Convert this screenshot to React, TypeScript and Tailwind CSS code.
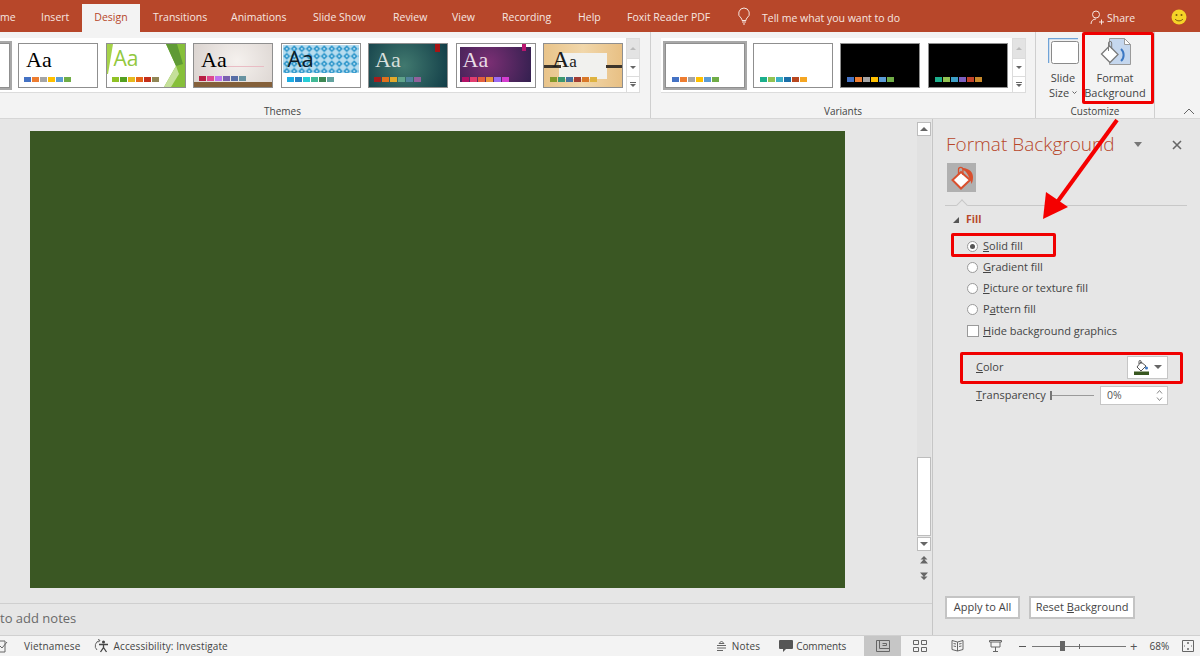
import type { ReactNode } from 'react';

const tabs = [
  { label: 'me', w: 'w-[41px]' },
  { label: 'Insert', w: 'w-[41px]' },
  { label: 'Design', w: 'w-[58px] text-center' },
  { label: 'Transitions', w: 'ml-[13px] w-[78px]' },
  { label: 'Animations', w: 'w-[82px]' },
  { label: 'Slide Show', w: 'w-[80px]' },
  { label: 'Review', w: 'w-[59px]' },
  { label: 'View', w: 'w-[50px]' },
  { label: 'Recording', w: 'w-[76px]' },
  { label: 'Help', w: 'w-[49px]' },
  { label: 'Foxit Reader PDF', w: 'w-[110px]' },
];

const palettes = {
  office: ['bg-[#4472c4]', 'bg-[#ed7d31]', 'bg-[#a5a5a5]', 'bg-[#ffc000]', 'bg-[#5b9bd5]', 'bg-[#70ad47]'],
  facet: ['bg-[#90c226]', 'bg-[#54a021]', 'bg-[#e6b91e]', 'bg-[#e76618]', 'bg-[#c42f1a]', 'bg-[#918655]'],
  wood: ['bg-[#b71e42]', 'bg-[#de478e]', 'bg-[#bc72f0]', 'bg-[#795faf]', 'bg-[#586ea6]', 'bg-[#6892a0]'],
  blue: ['bg-[#1cade4]', 'bg-[#2683c6]', 'bg-[#27ced7]', 'bg-[#42ba97]', 'bg-[#3e8853]', 'bg-[#62a39f]'],
  teal: ['bg-[#a51c1c]', 'bg-[#e0701c]', 'bg-[#e3a92a]', 'bg-[#5fa38a]', 'bg-[#4f829b]', 'bg-[#93609b]'],
  purple: ['bg-[#b31166]', 'bg-[#e33d6f]', 'bg-[#e45f3c]', 'bg-[#e9943a]', 'bg-[#9b6bf2]', 'bg-[#d53dd0]'],
  tan: ['bg-[#83992a]', 'bg-[#3c9770]', 'bg-[#44709d]', 'bg-[#a23c33]', 'bg-[#d97828]', 'bg-[#deb340]'],
  green2: ['bg-[#1caf8c]', 'bg-[#92c352]', 'bg-[#3cafc6]', 'bg-[#1b6fa8]', 'bg-[#b8471f]', 'bg-[#f5a623]'],
  green3: ['bg-[#1caf8c]', 'bg-[#92c352]', 'bg-[#3c9fc6]', 'bg-[#7d5fc0]', 'bg-[#c2432a]', 'bg-[#c98a2b]'],
};

function Swatches({ colors, className }: { colors: string[]; className: string }) {
  return (
    <div className={`absolute flex gap-px ${className}`}>
      {colors.map((c, i) => (
        <div key={i} className={`h-[5px] w-[7px] ${c}`} />
      ))}
    </div>
  );
}

function Aa({ className, children = 'Aa' }: { className: string; children?: ReactNode }) {
  return <span className={`absolute leading-none ${className}`}>{children}</span>;
}

function Thumb({ className = '', children }: { className?: string; children: ReactNode }) {
  return (
    <div className={`relative h-[45px] w-[80px] shrink-0 overflow-hidden border border-[#8f8f8f] ${className}`}>
      {children}
    </div>
  );
}

const serif = "font-['Liberation_Serif',serif]";

function ThemeGallery() {
  return (
    <div className="flex h-[55px] items-center gap-[7.5px] border-b border-[#dcdcdc] bg-white pl-[18px] pr-[3px]">
      <Thumb className="bg-white">
        <Aa className={`left-[7px] top-[5px] text-[22px] text-black ${serif}`}>Aa</Aa>
        <Swatches colors={palettes.office} className="left-[5px] top-[33px]" />
      </Thumb>
      <Thumb className="bg-white">
        <svg className="absolute inset-0" viewBox="0 0 78 43" width="78" height="43">
          <polygon points="0,0 6,0 1,30 0,30" fill="#a5d24a" />
          <polygon points="59,0 78,0 78,43 57,43 69,22" fill="#86bf3a" />
          <polygon points="59,0 70,0 76,20 69,22" fill="#5f9a35" />
          <polygon points="57,43 69,22 72,30 64,43" fill="#c5e09a" />
        </svg>
        <Aa className="left-[7px] top-[4px] font-['Open_Sans',sans-serif] text-[21px] text-[#92c83e]">Aa</Aa>
        <Swatches colors={palettes.facet} className="left-[5px] top-[33px]" />
      </Thumb>
      <Thumb className="bg-[radial-gradient(circle_at_55%_40%,#f5f1ee,#d9d2ce)]">
        <div className="absolute left-[32px] top-[22px] h-px w-[38px] bg-[#e9bcc4]" />
        <div className="absolute inset-x-0 bottom-0 h-[5px] bg-[#84603a]" />
        <Aa className={`left-[7px] top-[5px] text-[22px] text-black ${serif}`}>Aa</Aa>
        <Swatches colors={palettes.wood} className="left-[5px] top-[32px]" />
      </Thumb>
      <Thumb className="bg-white">
        <svg className="absolute left-px top-px" width="76" height="28">
          <defs>
            <pattern id="diamonds" width="7.500" height="7.500" patternUnits="userSpaceOnUse">
              <rect width="7.500" height="7.500" fill="#b6dcef" />
              <polygon points="3.750,0.200 7.300,3.750 3.750,7.300 0.200,3.750" fill="#2f97cb" />
              <circle cx="3.750" cy="3.750" r="1" fill="#cfe9f6" />
            </pattern>
          </defs>
          <rect width="76" height="28" fill="url(#diamonds)" />
        </svg>
        <Aa className="left-[6px] top-[3px] font-['Open_Sans',sans-serif] text-[22px] text-[#0c1c28]">Aa</Aa>
        <Swatches colors={palettes.blue} className="left-[5px] top-[33px]" />
      </Thumb>
      <Thumb className="bg-[radial-gradient(circle_at_45%_50%,#41796f,#123e48)]">
        <div className="absolute left-[66px] top-0 h-[8px] w-[5px] bg-[#a81414]" />
        <Aa className={`left-[6px] top-[5px] text-[22px] text-[#d8dfdc] ${serif}`}>Aa</Aa>
        <Swatches colors={palettes.teal} className="left-[5px] top-[33px]" />
      </Thumb>
      <Thumb className="bg-white">
        <div className="absolute left-[3px] top-[3px] h-[35px] w-[71px] bg-[radial-gradient(circle_at_40%_45%,#7b2f74,#33204f)]" />
        <div className="absolute left-[65px] top-0 h-[7px] w-[4px] bg-[#b8166f]" />
        <Aa className={`left-[6px] top-[5px] text-[22px] text-[#e8dce6] ${serif}`}>Aa</Aa>
        <Swatches colors={palettes.purple} className="left-[5px] top-[33px]" />
      </Thumb>
      <Thumb className="bg-[linear-gradient(90deg,#e9c48a,#f1d7aa,#e8c084)]">
        <div className="absolute left-[15px] top-[9px] h-[26px] w-[48px] bg-[#f1f1ee]" />
        <div className="absolute left-0 top-[21px] h-[3px] w-[17px] bg-[#3d352b]" />
        <div className="absolute left-[62px] top-[21px] h-[3px] w-[16px] bg-[#3d352b]" />
        <Aa className={`left-[8px] top-[3px] text-[24px] text-[#1c1c1c] ${serif}`}>
          A<span className="text-[17px]">a</span>
        </Aa>
        <Swatches colors={palettes.tan} className="left-[6px] top-[33px]" />
      </Thumb>
    </div>
  );
}

function VariantThumb({ dark, colors, selected }: { dark?: boolean; colors: string[]; selected?: boolean }) {
  return (
    <div
      className={`relative h-[45px] w-[80px] shrink-0 border border-[#8f8f8f] ${selected ? 'outline-2 outline-[#a8a8a8]' : ''} ${dark ? 'bg-black' : 'bg-white'}`}
    >
      <Swatches colors={colors} className="bottom-[5px] left-[6px]" />
    </div>
  );
}

function GalleryScroll() {
  return (
    <div className="flex h-[55px] w-[14px] flex-col border border-[#dcdcdc] bg-white text-[#777]">
      <div className="flex h-[20px] items-center justify-center border-b border-[#dcdcdc] bg-[#e3e3e3]">
        <div className="h-0 w-0 border-x-[3px] border-b-[3px] border-x-transparent border-b-[#bbb]" />
      </div>
      <div className="flex h-[18px] items-center justify-center border-b border-[#dcdcdc]">
        <div className="h-0 w-0 border-x-[3px] border-t-[3px] border-x-transparent border-t-[#666]" />
      </div>
      <div className="flex flex-1 flex-col items-center justify-center gap-px">
        <div className="h-px w-[6px] bg-[#666]" />
        <div className="h-0 w-0 border-x-[3px] border-t-[3px] border-x-transparent border-t-[#666]" />
      </div>
    </div>
  );
}

function GroupLabel({ children, className = '' }: { children: ReactNode; className?: string }) {
  return <div className={`mt-auto text-center text-[10px] leading-[14px] text-[#444] ${className}`}>{children}</div>;
}

function FormatBgIcon() {
  return (
    <svg className="ml-[2px]" width="32" height="29" viewBox="0 0 32 29">
      <path d="M9.500 .5h15l6 6v20h-21z" fill="#c5d7ee" stroke="#9a9a9a" />
      <path d="M24.500 .5v6h6z" fill="#fff" stroke="#9a9a9a" />
      <path d="M21 11c3.500 3 3.500 9 0 12" fill="none" stroke="#3c78c3" strokeWidth="2" />
      <path d="M9.500 8l8.500 8.500-8 8-8.500-8.500z" fill="#fff" stroke="#7a7a7a" strokeWidth="1.300" />
      <path d="M8.500 13V5a1.600 1.600 0 0 1 3.200 0v6" fill="none" stroke="#7a7a7a" />
    </svg>
  );
}

function SlideSizeIcon() {
  return (
    <svg width="31" height="26" viewBox="0 0 31 26">
      <path d="M0 .5h30" stroke="#6fa3d8" strokeWidth="1.500" />
      <path d="M.5 0v25" stroke="#6fa3d8" strokeWidth="1.500" />
      <rect x="3.500" y="3.500" width="27" height="22" fill="#fff" stroke="#8a8a8a" rx="2" />
    </svg>
  );
}

function Ribbon() {
  return (
    <div className="flex h-[87px] shrink-0 border-b border-[#d6d6d6] bg-[#f3f3f3]">
      {/* Themes */}
      <div className="flex w-[651px] flex-col border-r border-[#cfcfcf] pt-[6px]">
        <div className="relative flex items-start">
          <ThemeGallery />
          <div className="absolute left-[-70px] top-[5px] h-[45px] w-[80px] border border-[#8f8f8f] bg-white outline-2 outline-[#a8a8a8]" />
          <GalleryScroll />
        </div>
        <GroupLabel className="pr-[85px]">Themes</GroupLabel>
      </div>
      {/* Variants */}
      <div className="flex w-[385px] flex-col border-r border-[#cfcfcf] pt-[6px]">
        <div className="flex items-start pl-[10px]">
          <div className="flex h-[55px] items-center gap-[7.5px] border-b border-[#dcdcdc] bg-white pl-[4px] pr-[4px]">
            <VariantThumb selected colors={palettes.office} />
            <VariantThumb colors={palettes.green2} />
            <VariantThumb dark colors={palettes.office} />
            <VariantThumb dark colors={palettes.green3} />
          </div>
          <GalleryScroll />
        </div>
        <GroupLabel>Variants</GroupLabel>
      </div>
      {/* Customize */}
      <div className="flex w-[119px] flex-col border-r border-[#cfcfcf]">
        <div className="flex pl-[6px] pt-[6px]">
          <div className="flex w-[42px] flex-col items-center text-[11px] leading-[15px] text-[#444]">
            <div className="h-[32px]">
              <SlideSizeIcon />
            </div>
            <span>Slide</span>
            <span className="flex items-center gap-[3px]">
              Size
              <svg width="5" height="3" viewBox="0 0 5 3"><path d="M.5.500l2 2 2-2" fill="none" stroke="#666" /></svg>
            </span>
          </div>
          <div className="flex w-[62px] flex-col items-center text-[11px] leading-[15px] text-[#444]">
            <div className="h-[32px]">
              <FormatBgIcon />
            </div>
            <span>Format</span>
            <span>Background</span>
          </div>
        </div>
        <GroupLabel>Customize</GroupLabel>
      </div>
      <div className="flex flex-1 items-end justify-end pb-[3px] pr-[5px]">
        <svg width="12" height="7" viewBox="0 0 12 7">
          <path d="M1 6l5-5 5 5" fill="none" stroke="#666" />
        </svg>
      </div>
    </div>
  );
}

function ScrollBtn({ up, className = '' }: { up?: boolean; className?: string }) {
  return (
    <div className={`flex h-[14px] w-[14px] items-center justify-center border border-[#bdbdbd] bg-white ${className}`}>
      <div
        className={`h-0 w-0 border-x-[4px] border-x-transparent ${up ? 'border-b-[4px] border-b-[#666]' : 'border-t-[4px] border-t-[#666]'}`}
      />
    </div>
  );
}

function Scrollbar() {
  return (
    <div className="ml-auto mr-px flex w-[14px] flex-col pt-[3px]">
      <ScrollBtn up />
      <div className="h-[321px] w-[14px] bg-[#e1e1e1]" />
      <div className="h-[79px] w-[14px] border border-[#bdbdbd] bg-white" />
      <ScrollBtn className="mt-px" />
      <svg className="ml-[3px] mt-[5px]" width="8" height="8" viewBox="0 0 8 8">
        <path d="M4 0L7.500 3.500H.5zM4 3L8 7.500H0z" fill="#666" />
      </svg>
      <svg className="ml-[3px] mt-[8px]" width="8" height="8" viewBox="0 0 8 8">
        <path d="M.5 4.500H7.500L4 8zM0 .5H8L4 5z" fill="#666" />
      </svg>
    </div>
  );
}

function Radio({ checked, children }: { checked?: boolean; children: ReactNode }) {
  return (
    <div className="flex h-[21px] items-center">
      <div className="flex h-[11px] w-[11px] items-center justify-center rounded-full border border-[#9a9a9a] bg-white">
        {checked && <div className="h-[5px] w-[5px] rounded-full bg-[#555]" />}
      </div>
      <span className="ml-[5px] text-[11px] text-[#444]">{children}</span>
    </div>
  );
}

function BucketIcon() {
  return (
    <svg width="24" height="24" viewBox="0 0 24 24">
      <polygon points="11,6 20,14 11,22.500 2.500,14" fill="#fff" stroke="#d9502e" strokeWidth="2" />
      <path d="M8.500 9V3.500a2.200 2.200 0 0 1 4.400 0V9" fill="none" stroke="#d9502e" strokeWidth="1.300" />
      <path d="M13 2c6 .5 10 4 10 9 0 3-.5 5-1.500 7-.5-2.500-1-4-2-5.500C18 8 16 5 13 4z" fill="#d9502e" />
    </svg>
  );
}

function TaskPane() {
  return (
    <div className="flex w-[268px] shrink-0 flex-col border-l border-[#c6c6c6] bg-[#e6e6e6] pl-[12px] pr-[13px]">
      <div className="flex h-[44px] items-center pb-px pt-[8px]">
        <span className="ml-px font-['Open_Sans',sans-serif] text-[19px] font-light text-[#b7472a]">Format Background</span>
        <div className="ml-auto h-0 w-0 border-x-[4px] border-t-[5px] border-x-transparent border-t-[#777]" />
        <svg className="ml-[30px] mr-[5px]" width="10" height="10" viewBox="0 0 10 10">
          <path d="M1 1l8 8M9 1l-8 8" stroke="#666" strokeWidth="1.600" />
        </svg>
      </div>
      <div className="ml-[2px] flex h-[29px] w-[29px] items-center justify-center bg-[#b0b0b0]">
        <BucketIcon />
      </div>
      <div className="relative mt-[13px] h-px bg-[#c8c8c8]">
        <div className="absolute left-[13px] top-[-4px] h-[8px] w-[8px] rotate-45 border-l border-t border-[#c8c8c8] bg-[#e6e6e6]" />
      </div>
      <div className="flex h-[28px] items-center">
        <div className="ml-[8px] h-0 w-0 border-b-[6px] border-l-[6px] border-b-[#555] border-l-transparent" />
        <span className="ml-[7px] text-[10.500px] font-bold text-[#b7472a]">Fill</span>
      </div>
      <div className="ml-[22px] mt-[2px] flex flex-col">
        <Radio checked><u>S</u>olid fill</Radio>
        <Radio><u>G</u>radient fill</Radio>
        <Radio><u>P</u>icture or texture fill</Radio>
        <Radio>P<u>a</u>ttern fill</Radio>
        <div className="flex h-[22px] items-center">
          <div className="h-[12px] w-[12px] border border-[#9a9a9a] bg-white" />
          <span className="ml-[4px] text-[11px] text-[#444]"><u>H</u>ide background graphics</span>
        </div>
      </div>
      <div className="mr-[19px] mt-[13px] flex h-[24px] items-center pl-[31px]">
        <span className="text-[11px] text-[#444]"><u>C</u>olor</span>
        <div className="ml-auto flex h-[23px] w-[41px] items-center justify-center gap-[5px] border border-[#c6c6c6] bg-white">
          <svg width="15" height="15" viewBox="0 0 15 15">
            <path d="M7 2l5 4-5 5-4-4z" fill="#fff" stroke="#555" />
            <path d="M5 4V1.500a1 1 0 0 1 2 0V4" fill="none" stroke="#555" />
            <circle cx="12.500" cy="8" r="1.500" fill="#3b78c4" />
            <rect x="0" y="11.500" width="15" height="3.500" fill="#38571f" />
          </svg>
          <div className="h-0 w-0 border-x-[4px] border-t-[4px] border-x-transparent border-t-[#666]" />
        </div>
      </div>
      <div className="mr-[19px] mt-[7px] flex h-[19px] items-center pl-[31px]">
        <span className="w-[74px] text-[11px] text-[#444]"><u>T</u>ransparency</span>
        <div className="flex w-[44px] items-center">
          <div className="h-[9px] w-[2px] bg-[#777]" />
          <div className="h-px flex-1 bg-[#9a9a9a]" />
        </div>
        <div className="ml-auto flex h-[19px] w-[68px] items-center justify-between border border-[#c6c6c6] bg-white pl-[6px] pr-[4px] text-[10.500px] text-[#555]">
          0%
          <div className="flex flex-col gap-[3px]">
            <svg width="7" height="4" viewBox="0 0 7 4"><path d="M1 3.500l2.500-3 2.500 3" fill="none" stroke="#888" /></svg>
            <svg width="7" height="4" viewBox="0 0 7 4"><path d="M1 .5l2.500 3 2.500-3" fill="none" stroke="#888" /></svg>
          </div>
        </div>
      </div>
      <div className="mb-[16px] mt-auto flex gap-[9px] text-[11px] text-[#444]">
        <div className="flex h-[23px] w-[75px] items-center justify-center border-2 border-[#c4c4c4] bg-white">Apply to All</div>
        <div className="flex h-[23px] w-[106px] items-center justify-center border-2 border-[#c4c4c4] bg-white">Reset&nbsp;<u>B</u>ackground</div>
      </div>
    </div>
  );
}

function StatusBar() {
  return (
    <div className="flex h-[21px] shrink-0 items-center border-t border-[#d0d0d0] bg-[#f3f3f3] text-[10px] text-[#444]">
      <svg className="ml-[-2px]" width="10" height="13" viewBox="0 0 10 13">
        <path d="M0 1h7v11H0M2 6l2 2 5-6" fill="none" stroke="#666" />
      </svg>
      <span className="ml-[16px] tracking-[0.2px]">Vietnamese</span>
      <svg className="ml-[12px]" width="16" height="14" viewBox="0 0 16 14">
        <path d="M7 1.500A5.500 5.500 0 0 0 4 11M7 1.500L5 0M7 1.500L5 3.500" fill="none" stroke="#666" />
        <circle cx="10.500" cy="3" r="1.500" fill="#444" />
        <path d="M6 5.500l9 0M10.500 5.500v3l-3 4.500M10.500 8.500l3 4.500" fill="none" stroke="#444" strokeWidth="1.300" />
      </svg>
      <span className="ml-[5px] tracking-[0.1px]">Accessibility: Investigate</span>
      <svg className="ml-[488px]" width="12" height="12" viewBox="0 0 12 12">
        <path d="M5.500 1L8 3.500H3zM1 5.500h9M1 8h9M1 10.500h6" fill="none" stroke="#666" />
      </svg>
      <span className="ml-[4px] tracking-[0.2px]">Notes</span>
      <svg className="ml-[19px]" width="14" height="13" viewBox="0 0 14 13">
        <path d="M1 0h12a1 1 0 0 1 1 1v7a1 1 0 0 1-1 1H7l-3 3V9H1a1 1 0 0 1-1-1V1a1 1 0 0 1 1-1z" fill="#555" />
      </svg>
      <span className="ml-[3px] tracking-[-0.15px]">Comments</span>
      <div className="ml-[18px] flex h-full w-[37px] items-center justify-center bg-[#c6c6c6]">
        <svg width="14" height="12" viewBox="0 0 14 12">
          <path d="M.5.500h13v11H.5zM3.500.500v8h10M6.500 3.500h4v2h-4" fill="none" stroke="#666" />
        </svg>
      </div>
      <svg className="ml-[12px]" width="14" height="12" viewBox="0 0 14 12">
        <path d="M.5.500h5v4h-5zM8.500.500h5v4h-5zM.5 7.500h5v4h-5zM8.500 7.500h5v4h-5z" fill="none" stroke="#666" />
      </svg>
      <svg className="ml-[24px]" width="13" height="12" viewBox="0 0 13 12">
        <path d="M6.500 2L1 .5v9L6.500 11l5.500-1.500v-9zM6.500 2v9M2.500 3.500l2.500.5M2.500 6l2.500.5M8 4l2.500-.5M8 6.500l2.500-.5" fill="none" stroke="#666" />
      </svg>
      <svg className="ml-[25px]" width="13" height="12" viewBox="0 0 13 12">
        <path d="M.5.500h12v1.500H.5zM2 2v5h9V2M6.500 7v4M4 11.500h5" fill="none" stroke="#666" />
      </svg>
      <div className="ml-[17px] h-px w-[7px] bg-[#555]" />
      <div className="relative ml-[6px] h-px w-[94px] bg-[#777]">
        <div className="absolute left-[28px] top-[-5px] h-[10px] w-[5px] bg-[#666]" />
        <div className="absolute left-[47px] top-[-2px] h-[5px] w-px bg-[#666]" />
      </div>
      <span className="ml-[4px] text-[13px] leading-none text-[#555]">+</span>
      <span className="ml-[12px]">68%</span>
      <svg className="ml-[13px]" width="12" height="12" viewBox="0 0 12 12">
        <path d="M.5.500h11v11H.5zM6 2v2M5 3h2M3 6H2M10 6H9M6 8v2M5 9h2" fill="none" stroke="#666" />
      </svg>
    </div>
  );
}

function Annotations() {
  return (
    <>
      <div className="absolute left-[1082px] top-[32px] h-[72px] w-[72px] rounded-[2px] border-[3px] border-[#f00000]" />
      <div className="absolute left-[951px] top-[233px] h-[24px] w-[105px] rounded-[2px] border-[3px] border-[#f00000]" />
      <div className="absolute left-[960px] top-[352px] h-[32px] w-[223px] rounded-[2px] border-[3px] border-[#f00000]" />
      <svg className="absolute left-[1030px] top-[115px]" width="100" height="110" viewBox="0 0 100 110">
        <path d="M87 5L28 86" stroke="#f50000" strokeWidth="4" />
        <polygon points="13,104 16,77 38,92" fill="#f50000" />
      </svg>
    </>
  );
}

export default function App() {
  return (
    <div className="relative flex h-[656px] w-[1200px] flex-col overflow-hidden bg-[#e6e6e6] font-['Open_Sans',sans-serif]">
      <div className="flex h-8 shrink-0 items-end whitespace-nowrap bg-[#b7472a] text-[10.500px] text-[#f6e6e0]">
        {tabs.map((t) => (
          <div
            key={t.label}
            className={`h-[28px] leading-[27px] ${t.w} ${t.label === 'Design' ? 'bg-[#f3f3f3] text-[#b7472a]' : ''}`}
          >
            {t.label}
          </div>
        ))}
        <svg className="mb-[7px]" width="14" height="18" viewBox="0 0 14 18">
          <path d="M7 1a5.500 5.500 0 0 0-3 10c.7.6 1 1.500 1 2.500h4c0-1 .3-1.900 1-2.500A5.500 5.500 0 0 0 7 1zM5 15h4M6 17h2" fill="none" stroke="#f6e6e0" />
        </svg>
        <span className="mb-[7px] ml-[11px] w-[141px] leading-[14px]">Tell me what you want to do</span>
        <svg className="mb-[7px] ml-[187px]" width="14" height="15" viewBox="0 0 14 15">
          <circle cx="6" cy="4.500" r="3.500" fill="none" stroke="#f6e6e0" />
          <path d="M1 14c0-3 2-5 5-5M9 12h5M11.500 9.500v5" fill="none" stroke="#f6e6e0" />
        </svg>
        <span className="mb-[7px] ml-[3px] w-[28px] leading-[14px]">Share</span>
        <svg className="mb-[7px] ml-[36px]" width="16" height="16" viewBox="0 0 16 16">
          <circle cx="8" cy="8" r="7.500" fill="#f5d327" />
          <circle cx="5.500" cy="6" r="1" fill="#7a5a10" />
          <circle cx="10.500" cy="6" r="1" fill="#7a5a10" />
          <path d="M4 10c2 2.500 6 2.500 8 0" fill="none" stroke="#7a5a10" />
        </svg>
      </div>
      <Ribbon />
      <div className="flex min-h-0 flex-1">
        <div className="flex min-w-0 flex-1 flex-col">
          <div className="flex min-h-0 flex-1">
            <div className="ml-[30px] mt-[12px] h-[457px] w-[815px] bg-[#3a5723]" />
            <Scrollbar />
          </div>
          <div className="flex h-[32px] items-center border-t border-[#cfcfcf] pb-[2px] text-[13px] text-[#6a6a6a]">
            to add notes
          </div>
        </div>
        <TaskPane />
      </div>
      <StatusBar />
      <Annotations />
    </div>
  );
}
